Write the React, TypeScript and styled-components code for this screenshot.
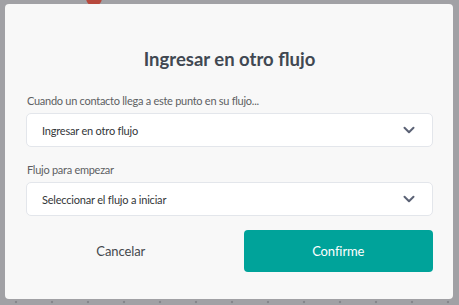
import React from 'react'
import styled, { createGlobalStyle } from 'styled-components'

const GlobalStyle = createGlobalStyle`
  html, body {
    margin: 0;
    padding: 0;
    height: 100%;
    overflow: hidden;
  }
  body {
    font-family: Lato, 'Liberation Sans', sans-serif;
    background-color: #a1a1a5;
  }
`

const ChevronDown: React.FC = () => (
  <svg width='14' height='14' viewBox='0 0 14 14' fill='none'>
    <path d='M2.5 4.8 L7 9.2 L11.5 4.8' stroke='#5b6275' strokeWidth='2' strokeLinecap='round' strokeLinejoin='round' />
  </svg>
)

interface SelectProps {
  label: string
  value: string
}

const SelectField: React.FC<SelectProps> = ({ label, value }) => (
  <Field>
    <FieldLabel>{label}</FieldLabel>
    <SelectBox>
      <SelectValue>{value}</SelectValue>
      <ChevronDown />
    </SelectBox>
  </Field>
)

export default function App() {
  return (
    <>
      <GlobalStyle />
      <Canvas>
        <NodeHandle />
      </Canvas>
      <Overlay>
        <Modal>
          <Title>Ingresar en otro flujo</Title>
          <Fields>
            <SelectField
              label='Cuando un contacto llega a este punto en su flujo...'
              value='Ingresar en otro flujo'
            />
            <SelectField label='Flujo para empezar' value='Seleccionar el flujo a iniciar' />
          </Fields>
          <Actions>
            <CancelButton>Cancelar</CancelButton>
            <ConfirmButton>Confirme</ConfirmButton>
          </Actions>
        </Modal>
      </Overlay>
    </>
  )
}

const Canvas = styled.div`
  position: fixed;
  inset: 0;
  background-color: #a1a1a5;
  background-image: radial-gradient(circle, #86868b 1.2px, transparent 1.6px);
  background-size: 36px 36px;
  background-position: -2px -4px;
`
const NodeHandle = styled.div`
  position: absolute;
  left: 86px;
  top: -10px;
  width: 16px;
  height: 16px;
  border-radius: 50%;
  background-color: #b8493d;
`
const Overlay = styled.div`
  position: fixed;
  inset: 0;
  display: flex;
  align-items: flex-start;
  padding: 4px 0 0 5px;
`
const Modal = styled.div`
  width: 448px;
  height: 295px;
  box-sizing: border-box;
  padding: 0 20px 0 21px;
  background-color: #f8f8f8;
  border-radius: 4px;
  display: flex;
  flex-direction: column;
`
const Title = styled.h2`
  margin: 44px 0 0;
  text-align: center;
  font-size: 18.5px;
  line-height: 22px;
  font-weight: 700;
  color: #414852;
`
const Fields = styled.div`
  margin-top: 24px;
  display: flex;
  flex-direction: column;
  gap: 16px;
`
const Field = styled.div`
  display: flex;
  flex-direction: column;
  gap: 5px;
`
const FieldLabel = styled.label`
  padding-left: 1px;
  font-size: 11px;
  line-height: 14px;
  letter-spacing: -0.27px;
  color: #5d5f63;
`
const SelectBox = styled.div`
  height: 34px;
  box-sizing: border-box;
  display: flex;
  align-items: center;
  justify-content: space-between;
  padding: 0 16px 0 15px;
  background-color: #ffffff;
  border: 1px solid #e3e6eb;
  border-radius: 5px;
`
const SelectValue = styled.span`
  font-size: 11px;
  letter-spacing: -0.2px;
  color: #333639;
`
const Actions = styled.div`
  margin-top: 14px;
  display: grid;
  grid-template-columns: 1fr 1fr;
  gap: 28px;
`
const CancelButton = styled.button`
  height: 42px;
  border: none;
  background: transparent;
  font-family: inherit;
  font-size: 13px;
  letter-spacing: -0.1px;
  color: #45484d;
  cursor: pointer;
`
const ConfirmButton = styled.button`
  height: 42px;
  border: none;
  border-radius: 4px;
  background-color: #00a39a;
  font-family: inherit;
  font-size: 13px;
  letter-spacing: -0.1px;
  color: #ffffff;
  cursor: pointer;
`
